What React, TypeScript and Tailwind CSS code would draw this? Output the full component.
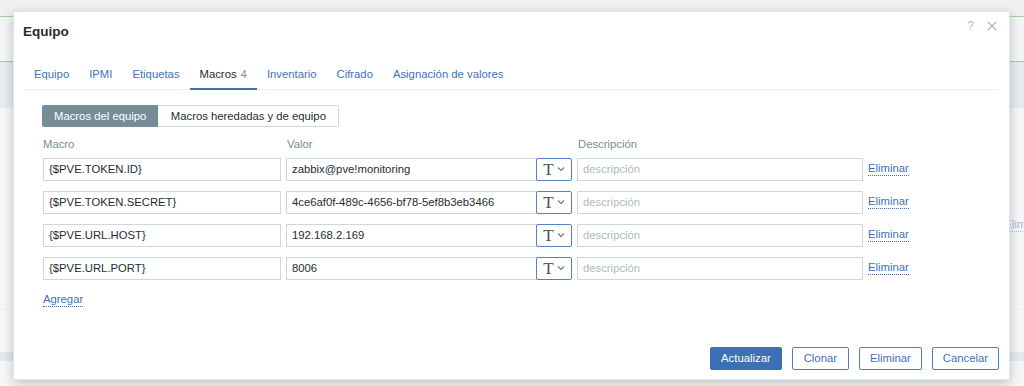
import React from "react";

const rows = [
  { macro: "{$PVE.TOKEN.ID}", value: "zabbix@pve!monitoring" },
  { macro: "{$PVE.TOKEN.SECRET}", value: "4ce6af0f-489c-4656-bf78-5ef8b3eb3466" },
  { macro: "{$PVE.URL.HOST}", value: "192.168.2.169" },
  { macro: "{$PVE.URL.PORT}", value: "8006" },
];

const tabs = ["Equipo", "IPMI", "Etiquetas", "Macros", "Inventario", "Cifrado", "Asignación de valores"];

function Chevron() {
  return (
    <svg width="8" height="6" viewBox="0 0 8 6" className="ml-[3px]">
      <path d="M1 1.5 L4 4.5 L7 1.5" fill="none" stroke="#6b767c" strokeWidth="1.1" />
    </svg>
  );
}

export default function App() {
  return (
    <div
      className="relative w-[1024px] h-[386px] overflow-hidden bg-[#f5f6f7] text-[11.3px] text-[#1f2c33]"
      style={{ fontFamily: '"Liberation Sans", Arial, sans-serif' }}
    >
      {/* background page (dimmed) */}
      <div className="flex flex-col">
        <div className="h-[16px] bg-[#eef0f1]" />
        <div className="h-px bg-[#a3cfa3]" />
        <div className="h-[44px] bg-[#f3f4f5]" />
        <div className="h-px bg-[#a3cfa3]" />
        <div className="h-[46px] bg-[#e8ebed]" />
        <div className="h-[244px] bg-[#f5f6f7] flex flex-col">
          <div className="flex justify-end pt-[110px] mr-[-21px]">
            <span className="text-[#a9bbd6] border-b border-dotted border-[#a9bbd6] leading-[13px]">Eliminar</span>
          </div>
          <div className="mt-auto mb-[42px] h-px bg-[#eceef0]" />
        </div>
        <div className="h-[9px] bg-[#e5e8ea]" />
        <div className="h-[25px] bg-[#f5f6f7]" />
      </div>

      {/* dialog */}
      <div className="absolute left-[13px] top-[11px] w-[997px] h-[369px] bg-white border border-[#e3e6e8] shadow-[0_3px_10px_rgba(0,0,0,0.22)] flex flex-col px-[10px]">
        <div className="flex items-start">
          <div className="pt-[11px] -ml-px text-[13.5px] font-bold leading-[18px] text-[#1f2c33]">Equipo</div>
          <div className="ml-auto flex items-center gap-[13px] pt-[5px] pr-[2px] text-[#b5bcc0]">
            <span className="text-[12px]">?</span>
            <svg width="10" height="10" viewBox="0 0 10 10">
              <path d="M1 1 L9 9 M9 1 L1 9" stroke="#b0b7bb" strokeWidth="1.4" />
            </svg>
          </div>
        </div>

        {/* tabs */}
        <div className="mt-[19px] flex border-b border-[#ebeef0]">
          {tabs.map((t) =>
            t === "Macros" ? (
              <div key={t} className="h-[30px] -mb-px px-[10px] flex items-center border-b-[2px] border-[#3f72b5] text-[#1f2c33]">
                Macros<span className="ml-[4px] text-[#768d99]">4</span>
              </div>
            ) : (
              <div key={t} className="h-[30px] -mb-px px-[10px] flex items-center border-b-[2px] border-transparent text-[#3f72b5]">
                {t}
              </div>
            )
          )}
        </div>

        {/* content */}
        <div className="pl-[19px] flex flex-col">
          <div className="mt-[15px] flex h-[22px]">
            <div className="px-[12px] -ml-px flex items-center bg-[#768d99] text-white rounded-l-[2px]">Macros del equipo</div>
            <div className="px-[12.5px] flex items-center border border-[#cfd7db] border-l-0 rounded-r-[2px] text-[#1f2c33]">
              Macros heredadas y de equipo
            </div>
          </div>

          <div className="mt-[10px] grid grid-cols-[238px_286px_286px_auto] gap-x-[5px] leading-[14px] text-[#768d99]">
            <div>Macro</div>
            <div className="pl-px">Valor</div>
            <div className="pl-px">Descripción</div>
            <div />
          </div>

          <div className="mt-[7px] grid grid-cols-[238px_286px_286px_auto] gap-x-[5px] gap-y-[10.5px]">
            {rows.map((r) => (
              <React.Fragment key={r.macro}>
                <div className="h-[22.5px] border border-[#cfd7db] px-[5px] flex items-center text-[#1f2c33]">{r.macro}</div>
                <div className="h-[22.5px] flex">
                  <div className="flex-1 border border-[#cfd7db] px-[5px] flex items-center text-[#1f2c33]">{r.value}</div>
                  <div className="w-[36px] border border-[#5482c2] rounded-[2px] flex items-center justify-center -ml-px">
                    <span
                      className="text-[17px] leading-none text-[#4a5257]"
                      style={{ fontFamily: '"Liberation Serif", "Times New Roman", serif' }}
                    >
                      T
                    </span>
                    <Chevron />
                  </div>
                </div>
                <div className="h-[22.5px] border border-[#cfd7db] px-[5px] flex items-center text-[#acbbc2]">descripción</div>
                <div className="flex items-center">
                  <span className="text-[#3f72b5] leading-[13px] border-b border-dotted border-[#3f72b5]">Eliminar</span>
                </div>
              </React.Fragment>
            ))}
          </div>

          <div className="mt-[13px] flex">
            <span className="text-[#3f72b5] leading-[13px] border-b border-dotted border-[#3f72b5]">Agregar</span>
          </div>
        </div>

        {/* footer */}
        <div className="mt-auto mb-[9px] flex justify-end gap-[10px]">
          <button className="h-[23px] px-[10px] rounded-[2px] bg-[#3b70b5] border border-[#3b70b5] text-white">Actualizar</button>
          <button className="h-[23px] px-[11px] rounded-[2px] bg-white border border-[#4f7fc0] text-[#3f72b5]">Clonar</button>
          <button className="h-[23px] px-[10px] rounded-[2px] bg-white border border-[#4f7fc0] text-[#3f72b5]">Eliminar</button>
          <button className="h-[23px] px-[10px] rounded-[2px] bg-white border border-[#4f7fc0] text-[#3f72b5]">Cancelar</button>
        </div>
      </div>
    </div>
  );
}
